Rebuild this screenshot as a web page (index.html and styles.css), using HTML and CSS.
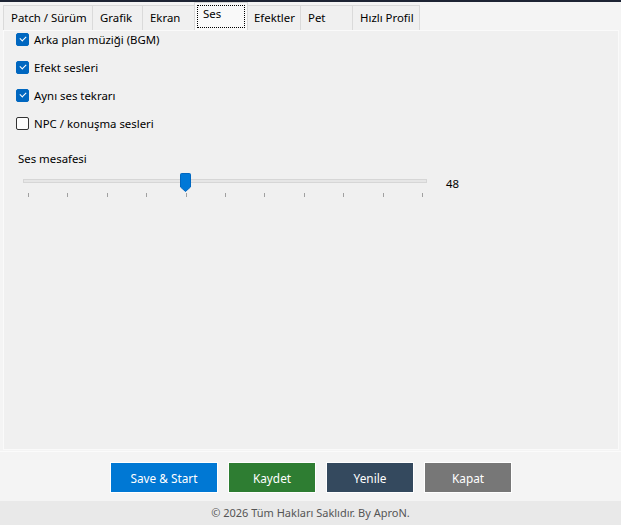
FILE: index.html
```html
<!DOCTYPE html>
<html lang="tr">

<head>
    <meta charset="UTF-8">
    <meta name="viewport" content="width=device-width, initial-scale=1.0">
    <title>Ayarlar</title>
    <link rel="stylesheet" href="styles.css">
</head>

<body>
    <div class="topLine"></div>
    <div class="tabs">
        <div class="tab t1">Patch / Sürüm</div>
        <div class="tab t2">Grafik</div>
        <div class="tab t3">Ekran</div>
        <div class="tab t4 active"><span>Ses</span></div>
        <div class="tab t5">Efektler</div>
        <div class="tab t6">Pet</div>
        <div class="tab t7">Hızlı Profil</div>
    </div>

    <div class="panel">
        <label class="check"><span class="box on"></span>Arka plan müziği (BGM)</label>
        <label class="check"><span class="box on"></span>Efekt sesleri</label>
        <label class="check"><span class="box on"></span>Aynı ses tekrarı</label>
        <label class="check"><span class="box"></span>NPC / konuşma sesleri</label>

        <div class="sliderTitle">Ses mesafesi</div>
        <div class="sliderRow">
            <div class="slider">
                <div class="track"></div>
                <svg class="thumb" width="11" height="19" viewBox="0 0 11 19">
                    <path d="M0.5 1.5 Q0.5 0.5 1.5 0.5 H9.5 Q10.5 0.5 10.5 1.5 V14 L5.5 18.5 L0.5 14 Z" fill="#0078d7" stroke="#0067c0" stroke-width="1" />
                </svg>
                <div class="ticks">
                    <i></i><i></i><i></i><i></i><i></i><i></i><i></i><i></i><i></i><i></i><i></i>
                </div>
            </div>
            <span class="value">48</span>
        </div>
    </div>

    <div class="actions">
        <button class="btn blue">Save &amp; Start</button>
        <button class="btn green">Kaydet</button>
        <button class="btn navy">Yenile</button>
        <button class="btn gray">Kapat</button>
    </div>

    <div class="footer">© 2026 Tüm Hakları Saklıdır. By AproN.</div>
</body>

</html>
```

FILE: styles.css
```css
/* Base styles */
body {
    margin: 0;
    background-color: #f4f4f4;
    font-family: "Noto Sans", "Open Sans", sans-serif;
    font-size: 11.4px;
    color: #000;
    width: 621px;
    height: 525px;
    overflow: hidden;
}

.topLine {
    height: 2px;
    background-color: #1d2434;
}

/* Tabs */
.tabs {
    display: flex;
    align-items: flex-end;
    height: 28px;
    padding-left: 3px;
}

.tab {
    height: 25px;
    box-sizing: border-box;
    padding: 4px 0 0 7px;
    background-color: #f0f0f0;
    border: 1px solid #dadada;
    border-bottom: none;
    border-left: none;
    white-space: nowrap;
}

.t1 { width: 90px; border-left: 1px solid #dadada; }
.t2 { width: 50px; }
.t3 { width: 52px; }
.t5 { width: 54px; }
.t6 { width: 52px; }
.t7 { width: 67px; }

.tab.active {
    width: 54px;
    height: 28px;
    margin: 0 -1px 0 -1px;
    padding: 2px;
    background-color: #f9f9f9;
    border: 1px solid #dadada;
    border-bottom: none;
    position: relative;
}

.tab.active span {
    display: block;
    height: 23px;
    box-sizing: border-box;
    padding: 0 0 0 5px;
    border: 1px dotted #000;
}

/* Panel */
.panel {
    height: 420px;
    box-sizing: border-box;
    margin: 0 2px 0 3px;
    padding: 0 0 0 12px;
    background-color: #f0f0f0;
    border: 1px solid #fafafa;
    display: flex;
    flex-direction: column;
}

.check {
    display: flex;
    align-items: center;
    gap: 5px;
    height: 17px;
    margin-bottom: 11px;
}

.box {
    width: 13px;
    height: 13px;
    box-sizing: border-box;
    border: 1px solid #333;
    border-radius: 2px;
    background-color: #fdfdfd;
    position: relative;
}

.box.on {
    background-color: #0067c0;
    border-color: #0067c0;
}

.box.on::after {
    content: "";
    position: absolute;
    left: 3px;
    top: 2px;
    width: 5px;
    height: 3px;
    border-left: 1.3px solid #fff;
    border-bottom: 1.3px solid #fff;
    transform: rotate(-45deg);
}

.sliderTitle {
    margin: 8px 0 0 2px;
    height: 18px;
}

.sliderRow {
    display: flex;
    align-items: flex-start;
    margin-top: 4px;
}

.slider {
    width: 404px;
    margin-left: 7px;
    position: relative;
    height: 26px;
}

.track {
    margin-top: 6px;
    height: 4px;
    box-sizing: border-box;
    background-color: #e6e6e6;
    border: 1px solid #d6d6d6;
}

.thumb {
    position: absolute;
    left: 157px;
    top: 0;
}

.ticks {
    display: flex;
    justify-content: space-between;
    padding: 0 4px 0 5px;
    margin-top: 10px;
}

.ticks i {
    width: 1px;
    height: 4px;
    background-color: #a0a0a0;
}

.value {
    margin: 3px 0 0 19px;
}

/* Bottom buttons */
.actions {
    height: 50px;
    box-sizing: border-box;
    margin-top: 1px;
    padding-top: 2px;
    border-top: 1px solid #fbfbfb;
    display: flex;
    justify-content: center;
    align-items: center;
    gap: 10px;
    padding-left: 1px;
}

.btn {
    height: 31px;
    width: 88px;
    border: 1px solid #fff;
    color: #fff;
    font-family: "Noto Sans", "Open Sans", sans-serif;
    font-size: 11.8px;
    padding: 0;
}

.btn.blue { width: 108px; background-color: #0078d4; }
.btn.green { background-color: #2e7d32; }
.btn.navy { background-color: #34495e; }
.btn.gray { background-color: #777777; }

.footer {
    height: 24px;
    line-height: 24px;
    background-color: #e9e9e9;
    color: #555;
    text-align: center;
    font-size: 11px;
}
```
